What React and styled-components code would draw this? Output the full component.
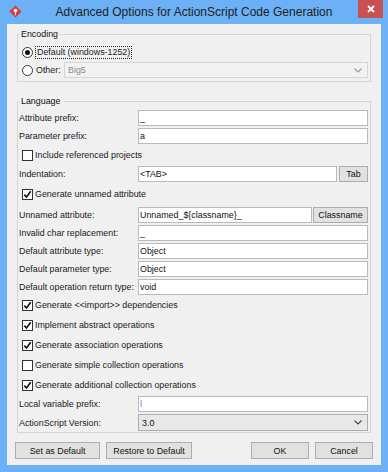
import styled, { createGlobalStyle } from "styled-components";

const ui = `"Liberation Sans", Arial, sans-serif`;
const small = "8.9px";

const GlobalStyle = createGlobalStyle`
  html, body { margin: 0; padding: 0; background: #6cb0f5; }
  body { font-family: ${ui}; }
`;

const Window = styled.div`
  width: 388px;
  height: 472px;
  box-sizing: border-box;
  background: #6cb0f5;
  display: flex;
  flex-direction: column;
`;

const TitleBar = styled.div`
  height: 24px;
  flex: none;
  display: grid;
  grid-template-columns: 1fr auto 1fr;
  align-items: start;
  padding: 0 5px;
`;

const TitleIcon = styled.svg`
  margin: 5px 0 0 4px;
`;

const TitleText = styled.div`
  font-size: 12px;
  line-height: 24px;
  color: #222;
  white-space: nowrap;
`;

const CloseButton = styled.div`
  justify-self: end;
  width: 25px;
  height: 18px;
  background: #c75050;
  display: flex;
  align-items: center;
  justify-content: center;
`;

const Content = styled.div`
  flex: 1;
  margin: 0 7px 7px;
  background: #f0f0f0;
  padding: 4px 8px 0;
  display: flex;
  flex-direction: column;
`;

const Group = styled.fieldset`
  margin: ${(p) => p.$top}px 2px 0;
  padding: ${(p) => p.$pt}px 2px ${(p) => p.$pb}px 1px;
  border: 1px solid #d5d5d5;
  min-width: 0;
  display: flex;
  flex-direction: column;
`;

const Legend = styled.legend`
  font-size: ${small};
  line-height: 12px;
  padding: 0 2px;
  color: #111;
`;

const Row = styled.div`
  display: flex;
  align-items: center;
  height: ${(p) => p.$h || 16}px;
  margin-top: ${(p) => p.$mt || 0}px;
`;

const Label = styled.div`
  width: 119px;
  flex: none;
  font-size: ${small};
  color: #1a1a1a;
  white-space: nowrap;
`;

const TextBox = styled.div`
  flex: 1;
  height: 100%;
  box-sizing: border-box;
  border: 1px solid #bababa;
  background: #fff;
  font-size: ${small};
  color: ${(p) => p.$color || "#111"};
  padding: 0 1px;
  display: flex;
  align-items: center;
  white-space: pre;
`;

const SideButton = styled.div`
  width: ${(p) => p.$w}px;
  flex: none;
  height: 100%;
  box-sizing: border-box;
  margin-left: ${(p) => p.$gap}px;
  background: #e1e1e1;
  border: 1px solid #adadad;
  font-size: ${small};
  color: #111;
  display: flex;
  align-items: center;
  justify-content: center;
`;

const Combo = styled.div`
  flex: 1;
  height: 100%;
  box-sizing: border-box;
  border: 1px solid ${(p) => (p.$disabled ? "#d6d6d6" : "#acacac")};
  background: ${(p) => (p.$disabled ? "#f2f2f2" : "#e8e8e8")};
  color: ${(p) => (p.$disabled ? "#8a8a8a" : "#111")};
  font-size: ${small};
  padding: 0 5px 0 3px;
  display: flex;
  align-items: center;
  justify-content: space-between;
`;

const CheckRow = styled.div`
  display: flex;
  align-items: center;
  gap: 2px;
  height: ${(p) => p.$h}px;
  margin-top: ${(p) => p.$mt || 0}px;
  padding-left: 3px;
  font-size: ${small};
  color: #1a1a1a;
  white-space: nowrap;
`;

const Box = styled.div`
  width: 11px;
  height: 11px;
  box-sizing: border-box;
  border: 1px solid #333;
  background: #fff;
  display: flex;
  align-items: center;
  justify-content: center;
  flex: none;
`;

const Radio = styled(Box)`
  border-radius: 50%;
  margin-right: 1px;
`;

const Dot = styled.div`
  width: 5px;
  height: 5px;
  border-radius: 50%;
  background: #111;
`;

const Focused = styled.span`
  outline: 1px dotted #222;
  padding: 0 1px;
  line-height: 11px;
`;

const ComboLabel = styled.span`
  width: 26px;
  flex: none;
`;

const ButtonRow = styled.div`
  display: flex;
  justify-content: space-between;
  margin-top: 9px;
`;

const ButtonGroup = styled.div`
  display: flex;
  gap: 6px;
`;

const Button = styled.div`
  width: ${(p) => p.$w}px;
  height: 17px;
  box-sizing: border-box;
  background: #e1e1e1;
  border: 1px solid #adadad;
  font-size: ${small};
  color: #111;
  display: flex;
  align-items: center;
  justify-content: center;
`;

const Chevron = ({ color }) => (
  <svg width="8" height="5" viewBox="0 0 8 5">
    <polyline points="0.5,0.5 4,4 7.5,0.5" fill="none" stroke={color} strokeWidth="1.1" />
  </svg>
);

const Check = ({ checked }) => (
  <Box>
    {checked && (
      <svg width="9" height="9" viewBox="0 0 9 9">
        <polyline points="1.3,4.6 3.5,7 7.7,1.3" fill="none" stroke="#151515" strokeWidth="1.7" />
      </svg>
    )}
  </Box>
);

const Field = ({ label, value, mt = 2, color, children }) => (
  <Row $mt={mt}>
    <Label>{label}</Label>
    <TextBox $color={color}>{value}</TextBox>
    {children}
  </Row>
);

const Option = ({ checked, text, h = 20, mt = 0 }) => (
  <CheckRow $h={h} $mt={mt}>
    <Check checked={checked} />
    {text}
  </CheckRow>
);

export default function App() {
  return (
    <Window>
      <GlobalStyle />
      <TitleBar>
        <TitleIcon width="13" height="13" viewBox="0 0 14 14">
          <path d="M7 0.5 L13.5 7 L7 13.5 L0.5 7 Z" fill="#e0373c" />
          <circle cx="7" cy="6" r="2" fill="#fff" />
          <path d="M7 8 L7 11" stroke="#fff" strokeWidth="1" />
        </TitleIcon>
        <TitleText>Advanced Options for ActionScript Code Generation</TitleText>
        <CloseButton>
          <svg width="8" height="8" viewBox="0 0 8 8">
            <path d="M1 1 L7 7 M7 1 L1 7" stroke="#fff" strokeWidth="1.8" />
          </svg>
        </CloseButton>
      </TitleBar>

      <Content>
        <Group $top={0} $pt={4} $pb={3}>
          <Legend>Encoding</Legend>
          <CheckRow $h={16}>
            <Radio>
              <Dot />
            </Radio>
            <Focused>Default (windows-1252)</Focused>
          </CheckRow>
          <CheckRow $h={16} $mt={2}>
            <Radio />
            <ComboLabel>Other:</ComboLabel>
            <Combo $disabled>
              Big5
              <Chevron color="#9a9a9a" />
            </Combo>
          </CheckRow>
        </Group>

        <Group $top={13} $pt={3} $pb={1}>
          <Legend>Language</Legend>
          <Field label="Attribute prefix:" value="_" mt={0} />
          <Field label="Parameter prefix:" value="a" />
          <Option text="Include referenced projects" h={18} mt={2} />
          <Field label="Indentation:" value="<TAB>">
            <SideButton $w={29} $gap={2}>Tab</SideButton>
          </Field>
          <Option checked text="Generate unnamed attribute" h={20} mt={2} />
          <Field label="Unnamed attribute:" value="Unnamed_${classname}_" mt={3}>
            <SideButton $w={55} $gap={1}>Classname</SideButton>
          </Field>
          <Field label="Invalid char replacement:" value="_" />
          <Field label="Default attribute type:" value="Object" />
          <Field label="Default parameter type:" value="Object" />
          <Field label="Default operation return type:" value="void" />
          <Option checked text="Generate <<import>> dependencies" />
          <Option checked text="Implement abstract operations" />
          <Option checked text="Generate association operations" />
          <Option text="Generate simple collection operations" />
          <Option checked text="Generate additional collection operations" />
          <Field label="Local variable prefix:" value="l" mt={1} color="#6f72c4" />
          <Row $h={17} $mt={2}>
            <Label>ActionScript Version:</Label>
            <Combo>
              3.0
              <Chevron color="#444" />
            </Combo>
          </Row>
        </Group>

        <ButtonRow>
          <ButtonGroup>
            <Button $w={85}>Set as Default</Button>
            <Button $w={86}>Restore to Default</Button>
          </ButtonGroup>
          <ButtonGroup>
            <Button $w={58}>OK</Button>
            <Button $w={58}>Cancel</Button>
          </ButtonGroup>
        </ButtonRow>
      </Content>
    </Window>
  );
}
